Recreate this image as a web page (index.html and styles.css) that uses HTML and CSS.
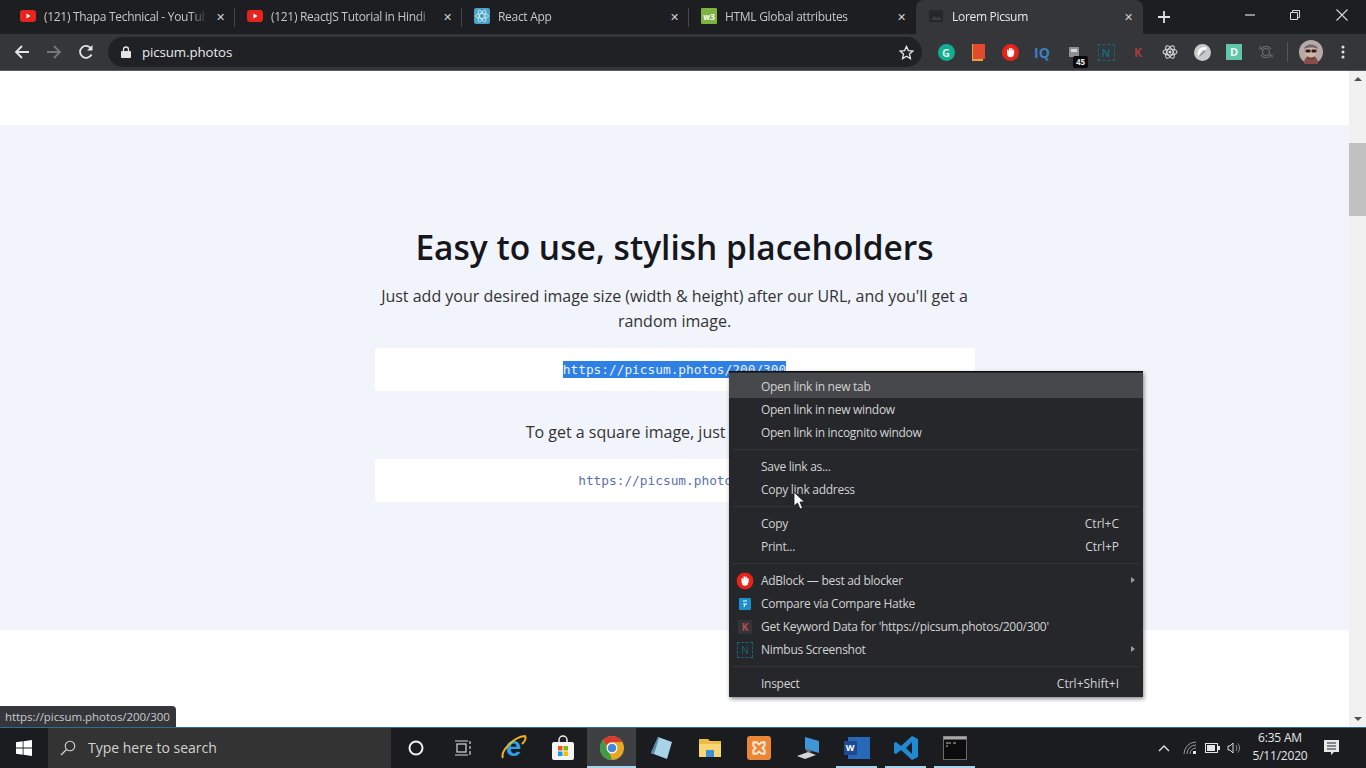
FILE: index.html
```html
<!DOCTYPE html>
<html lang="en">
<head>
    <meta charset="UTF-8">
    <title>Lorem Picsum</title>
    <link rel="stylesheet" href="styles.css">
</head>
<body>

    <!-- tab strip -->
    <div class="tabstrip">
        <div class="tab">
            <svg class="tab-icon" viewBox="0 0 16 16"><rect x="0" y="2" width="16" height="12" rx="3" fill="#e5241d"/><path d="M6.5 5.5l4 2.500-4 2.500z" fill="#fff"/></svg>
            <span class="tab-title">(121) Thapa Technical - YouTub</span>
            <span class="tab-close">&#10005;</span>
        </div>
        <div class="tab">
            <svg class="tab-icon" viewBox="0 0 16 16"><rect x="0" y="2" width="16" height="12" rx="3" fill="#e5241d"/><path d="M6.5 5.5l4 2.500-4 2.500z" fill="#fff"/></svg>
            <span class="tab-title">(121) ReactJS Tutorial in Hindi</span>
            <span class="tab-close">&#10005;</span>
        </div>
        <div class="tab">
            <svg class="tab-icon" viewBox="0 0 16 16"><rect width="16" height="16" rx="2" fill="#4aa3c7"/><g fill="none" stroke="#d5eef7" stroke-width=".8"><ellipse cx="8" cy="8" rx="6.500" ry="2.500"/><ellipse cx="8" cy="8" rx="6.500" ry="2.500" transform="rotate(60 8 8)"/><ellipse cx="8" cy="8" rx="6.500" ry="2.500" transform="rotate(120 8 8)"/></g></svg>
            <span class="tab-title">React App</span>
            <span class="tab-close">&#10005;</span>
        </div>
        <div class="tab tab-last">
            <svg class="tab-icon" viewBox="0 0 16 16"><rect width="16" height="16" rx="1" fill="#7cb342"/><text x="8" y="11.500" text-anchor="middle" class="w3-text">w3</text></svg>
            <span class="tab-title">HTML Global attributes</span>
            <span class="tab-close">&#10005;</span>
        </div>
        <div class="tab tab-active">
            <svg class="tab-icon" viewBox="0 0 16 16"><rect x="1" y="2" width="14" height="12" rx="2" fill="#26272a"/><path d="M3 12l3.500-4 2.500 2.500 2-2 2.500 3.500z" fill="#3e3f43"/></svg>
            <span class="tab-title">Lorem Picsum</span>
            <span class="tab-close">&#10005;</span>
        </div>
        <span class="new-tab">
            <svg width="12" height="12" viewBox="0 0 12 12"><path d="M6 0v12M0 6h12" stroke="#dfe1e5" stroke-width="1.800"/></svg>
        </span>
        <div class="window-controls">
            <svg width="10" height="10" viewBox="0 0 10 10"><path d="M0 5h10" stroke="#d8d9db" stroke-width="1.200"/></svg>
            <svg width="10" height="10" viewBox="0 0 10 10"><path d="M.5 2.500h7v7h-7zM2.500 2.500v-2h7v7h-2" fill="none" stroke="#d8d9db"/></svg>
            <svg width="12" height="12" viewBox="0 0 12 12"><path d="M.5.5l11 11M11.500.5l-11 11" stroke="#d8d9db" stroke-width="1.100"/></svg>
        </div>
    </div>

    <!-- address bar -->
    <div class="toolbar">
        <div class="nav-buttons">
            <svg width="16" height="16" viewBox="0 0 16 16"><path d="M15 8H2M8 2L2 8l6 6" fill="none" stroke="#e3e4e6" stroke-width="1.800"/></svg>
            <svg width="16" height="16" viewBox="0 0 16 16"><path d="M1 8h13M8 2l6 6-6 6" fill="none" stroke="#74767a" stroke-width="1.800"/></svg>
            <svg width="16" height="16" viewBox="0 0 16 16"><path d="M13.500 10.500A6 6 0 1 1 13 4.500" fill="none" stroke="#e3e4e6" stroke-width="1.800"/><path d="M14.500 1v5.500H9z" fill="#e3e4e6"/></svg>
        </div>
        <div class="omnibox">
            <svg width="10" height="12" viewBox="0 0 10 12"><path d="M2.500 5V3.500a2.500 2.500 0 0 1 5 0V5" fill="none" stroke="#e3e4e6" stroke-width="1.300"/><rect y="5" width="10" height="7" rx="1" fill="#e3e4e6"/></svg>
            <span class="url">picsum.photos</span>
            <svg class="star" width="15" height="15" viewBox="0 0 16 16"><path d="M8 1.500l2 4.500 4.800.5-3.600 3.200 1 4.800L8 12l-4.200 2.500 1-4.800L1.200 6.500 6 6z" fill="none" stroke="#e3e4e6" stroke-width="1.400"/></svg>
        </div>
        <div class="extensions">
            <span class="ext"><span class="ext-grammarly">G</span></span>
            <span class="ext"><svg width="14" height="17" viewBox="0 0 14 17"><rect width="13" height="15" x="1" fill="#e2492d"/><path d="M1 0v17h11v-2H2V0z" fill="#e8a33b"/></svg></span>
            <span class="ext"><svg width="17" height="17" viewBox="0 0 16 16"><circle cx="8" cy="8" r="8" fill="#e8231a"/><g stroke="#fff" stroke-width="1.500" stroke-linecap="round"><path d="M5.500 6v3M7.300 4.200V8M9 4.500V8M10.700 6v3"/></g><circle cx="8" cy="9.500" r="3" fill="#fff"/></svg></span>
            <span class="ext ext-iq">IQ</span>
            <span class="ext">
                <svg width="10" height="12" viewBox="0 0 10 12"><rect width="10" height="10" y="1" fill="#8e9094"/><rect x="2" y="3" width="6" height="3" fill="#d6d7d9"/></svg>
                <span class="ext-badge">45</span>
            </span>
            <span class="ext"><span class="ext-nimbus">N</span></span>
            <span class="ext ext-k">K</span>
            <span class="ext"><svg width="16" height="16" viewBox="0 0 16 16"><g fill="none" stroke="#d9dadc" stroke-width="1.100"><ellipse cx="8" cy="8" rx="7" ry="3"/><ellipse cx="8" cy="8" rx="7" ry="3" transform="rotate(60 8 8)"/><ellipse cx="8" cy="8" rx="7" ry="3" transform="rotate(120 8 8)"/></g><circle cx="8" cy="8" r="1.500" fill="#d9dadc"/></svg></span>
            <span class="ext"><svg width="17" height="17" viewBox="0 0 16 16"><circle cx="8" cy="8" r="8" fill="#c8c9cb"/><path d="M11.500 4.500A5 5 0 0 0 5 11" fill="none" stroke="#fff" stroke-width="2.500"/><path d="M5 11.500l5.500-5" stroke="#77797c" stroke-width="1"/></svg></span>
            <span class="ext"><span class="ext-d">D</span></span>
            <span class="ext"><svg width="16" height="16" viewBox="0 0 16 16"><g fill="none" stroke="#67696d" stroke-width="1.200"><path d="M3 5a6 6 0 0 1 10 0"/><path d="M13 11a6 6 0 0 1-10 0"/><circle cx="8" cy="8" r="3.500"/><path d="M2 2v3h3M14 14v-3h-3"/></g></svg></span>
        </div>
        <span class="toolbar-divider"></span>
        <svg class="avatar" width="24" height="24" viewBox="0 0 24 24"><circle cx="12" cy="12" r="12" fill="#b9a9a6"/><path d="M5 24c0-6 3-8 7-8s7 2 7 8z" fill="#8c4b4b"/><ellipse cx="12" cy="11" rx="6" ry="7" fill="#d8b3a4"/><path d="M5 9c1-6 13-6 14 0-4-2-10-2-14 0z" fill="#6d6a6c"/><rect x="6.500" y="9.500" width="5" height="3" rx="1" fill="#222"/><rect x="12.500" y="9.500" width="5" height="3" rx="1" fill="#222"/><path d="M8 16c2 2 6 2 8 0v2c-2 2-6 2-8 0z" fill="#5c4a45"/></svg>
        <svg class="menu-dots" width="4" height="14" viewBox="0 0 4 14"><circle cx="2" cy="2" r="1.500" fill="#e3e4e6"/><circle cx="2" cy="7" r="1.500" fill="#e3e4e6"/><circle cx="2" cy="12" r="1.500" fill="#e3e4e6"/></svg>
    </div>

    <!-- page -->
    <div class="viewport">
        <div class="page">
            <section class="hero">
                <h1>Easy to use, stylish placeholders</h1>
                <p>Just add your desired image size (width &amp; height) after our URL, and you'll get a random image.</p>
                <div class="code-box"><span class="code-selected">https://picsum.photos/200/300</span></div>
                <p class="square-text">To get a square image, just add the size.</p>
                <div class="code-box"><span class="code-link">https://picsum.photos/200</span></div>
            </section>
        </div>
        <div class="scrollbar">
            <span class="arrow-up"></span>
            <span class="thumb"></span>
            <span class="arrow-down"></span>
        </div>
    </div>

    <!-- taskbar -->
    <div class="taskbar">
        <div class="start">
            <svg width="16" height="16" viewBox="0 0 16 16"><path d="M0 2.300l6.700-1v6.200H0zM7.500 1.200L16 0v7.500H7.500zM0 8.500h6.700v6.200l-6.700-1zM7.500 8.500H16V16l-8.500-1.200z" fill="#fff"/></svg>
        </div>
        <div class="search">
            <svg width="16" height="16" viewBox="0 0 16 16"><circle cx="10" cy="6" r="4.800" fill="none" stroke="#d5d5d5" stroke-width="1.100"/><path d="M6.500 9.500L1 15" stroke="#d5d5d5" stroke-width="1.300"/></svg>
            <span>Type here to search</span>
        </div>
        <div class="task-icons">
            <span class="task"><svg width="16" height="16" viewBox="0 0 16 16"><circle cx="8" cy="8" r="6.500" fill="none" stroke="#f2f2f2" stroke-width="2"/></svg></span>
            <span class="task task-view"><svg width="18" height="16" viewBox="0 0 18 16"><g fill="none" stroke="#d8d8d8" stroke-width="1.200"><rect x="3" y="4" width="9" height="8"/><path d="M1 1h13M1 15h13M16 1v3M16 6v3M16 11v4"/></g></svg></span>
            <span class="task"><svg class="ie-icon" width="28" height="30" viewBox="0 0 28 30"><text x="13.500" y="23" text-anchor="middle" class="ie-text">e</text><path d="M3 25C0 19 13 4 25 3c2 3-1 6-3 8" fill="none" stroke="#eeb420" stroke-width="2"/></svg></span>
            <span class="task"><svg width="24" height="26" viewBox="0 0 24 26"><path d="M8 8V5a4 4 0 0 1 8 0v3" fill="none" stroke="#eee" stroke-width="1.500"/><rect x="1" y="7" width="22" height="18" rx="2" fill="#f4f4f4"/><rect x="7" y="11" width="4.500" height="4.500" fill="#f25022"/><rect x="12.500" y="11" width="4.500" height="4.500" fill="#7fba00"/><rect x="7" y="16.500" width="4.500" height="4.500" fill="#00a4ef"/><rect x="12.500" y="16.500" width="4.500" height="4.500" fill="#ffb900"/></svg></span>
            <span class="task task-active"><svg width="24" height="24" viewBox="0 0 24 24"><circle cx="12" cy="12" r="12" fill="#e5a823"/><path d="M12 0a12 12 0 0 1 10.400 6H12a6 6 0 0 0-5.600 3.800L3 4a12 12 0 0 1 9-4z" fill="#d93a2e"/><path d="M3 4l5 9 4 11A12 12 0 0 1 3 4z" fill="#3f9a47"/><circle cx="12" cy="12" r="5.500" fill="#fff"/><circle cx="12" cy="12" r="4.300" fill="#4a86d8"/></svg></span>
            <span class="task"><svg width="24" height="24" viewBox="0 0 24 24"><path d="M9 1l14 5-5 17L2 17z" fill="#a9d3e6"/><path d="M2 17L9 1l1 1-5 16z" fill="#4f8aa8"/></svg></span>
            <span class="task"><svg width="22" height="20" viewBox="0 0 22 20"><path d="M0 1h9l2 2h11v16H0z" fill="#eebd45"/><rect y="6" width="22" height="13" fill="#f7d774"/><rect x="7" y="12" width="8" height="7" fill="#3d8fd1"/></svg></span>
            <span class="task"><span class="xampp"><svg width="18" height="18" viewBox="0 0 16 16"><path d="M3 3h3l2 2 2-2h3v3l-2 2 2 2v3h-3l-2-2-2 2H3v-3l2-2-2-2z" fill="none" stroke="#fbe6d3" stroke-width="1.800" stroke-linejoin="round"/></svg></span></span>
            <span class="task"><svg width="24" height="24" viewBox="0 0 24 24"><path d="M9 1l14 4v12l-14-4z" fill="#3f95d8"/><path d="M1 20l11-4 8 3-11 4z" fill="#d5d5d5"/><path d="M10 13l5 2v2l-5-2z" fill="#6f7276"/></svg></span>
            <span class="task task-open"><span class="word-icon"><span class="word-badge">W</span></span></span>
            <span class="task task-open"><svg width="26" height="26" viewBox="0 0 26 26"><path d="M19 1l6 3v18l-6 3-11-10-5 4-2-1V8l2-1 5 4zM19 7l-6 6 6 6z" fill="#1f8ad2"/></svg></span>
            <span class="task task-open"><svg width="24" height="24" viewBox="0 0 24 24"><rect width="24" height="24" fill="#0c0c0c"/><rect x=".5" y=".5" width="23" height="23" fill="none" stroke="#6a6a6a"/><rect x=".5" y=".5" width="23" height="3" fill="#a9a9a9"/><path d="M3 7h5M10 7h3M3 10h2" stroke="#bdbdbd"/></svg></span>
        </div>
        <div class="tray">
            <svg class="tray-up" width="12" height="8" viewBox="0 0 12 8"><path d="M1 7l5-5 5 5" fill="none" stroke="#e4e4e4" stroke-width="1.300"/></svg>
            <svg class="tray-wifi" width="14" height="14" viewBox="0 0 14 14"><g fill="none" stroke="#9a9a9a"><path d="M1 13A12 12 0 0 1 13 1"/><path d="M4 13a9 9 0 0 1 9-9"/><path d="M7 13a6 6 0 0 1 6-6"/></g><rect x="10" y="10" width="3" height="3" fill="#e4e4e4"/></svg>
            <svg width="15" height="10" viewBox="0 0 15 10"><rect x=".5" y=".5" width="12" height="9" fill="none" stroke="#e4e4e4"/><rect x="2" y="2" width="8" height="6" fill="#e4e4e4"/><rect x="13" y="3" width="2" height="4" fill="#e4e4e4"/></svg>
            <svg width="14" height="14" viewBox="0 0 14 14"><path d="M1 5h2l3-3v10L3 9H1z" fill="none" stroke="#d8d8d8"/><path d="M9 4c1 2 1 4 0 6M11 2.500c2 3 2 6 0 9" fill="none" stroke="#8d8d8d"/></svg>
        </div>
        <div class="clock">
            <span>6:35 AM</span>
            <span>5/11/2020</span>
        </div>
        <span class="notify"><svg width="16" height="16" viewBox="0 0 16 16"><path d="M0 0h15v12H10l-3 3v-3H0z" fill="#e8e8e8"/><path d="M3 3h9M3 6h9M3 9h9" stroke="#222" /></svg></span>
    </div>

    <!-- status bubble -->
    <div class="status-bubble">https://picsum.photos/200/300</div>

    <!-- right click menu -->
    <div class="context-menu">
        <div class="menu-item menu-hover"><span>Open link in new tab</span></div>
        <div class="menu-item"><span>Open link in new window</span></div>
        <div class="menu-item"><span>Open link in incognito window</span></div>
        <div class="menu-sep"></div>
        <div class="menu-item"><span>Save link as...</span></div>
        <div class="menu-item"><span>Copy link address</span></div>
        <div class="menu-sep"></div>
        <div class="menu-item"><span>Copy</span><span class="shortcut">Ctrl+C</span></div>
        <div class="menu-item"><span>Print...</span><span class="shortcut">Ctrl+P</span></div>
        <div class="menu-sep"></div>
        <div class="menu-item">
            <svg class="menu-icon" width="17" height="17" viewBox="0 0 16 16"><circle cx="8" cy="8" r="8" fill="#e8231a"/><g stroke="#fff" stroke-width="1.500" stroke-linecap="round"><path d="M5.500 6v3M7.300 4.200V8M9 4.500V8M10.700 6v3"/></g><circle cx="8" cy="9.500" r="3" fill="#fff"/></svg>
            <span>AdBlock — best ad blocker</span><span class="submenu"></span>
        </div>
        <div class="menu-item">
            <svg class="menu-icon" width="12" height="12" viewBox="0 0 12 12"><rect width="12" height="12" rx="1" fill="#1b8fc9"/><path d="M4 3h4M4 6h4M6 6l-1 3" stroke="#fff"/></svg>
            <span>Compare via Compare Hatke</span>
        </div>
        <div class="menu-item">
            <span class="menu-icon menu-k">K</span>
            <span>Get Keyword Data for 'https://picsum.photos/200/300'</span>
        </div>
        <div class="menu-item">
            <span class="menu-icon menu-n">N</span>
            <span>Nimbus Screenshot</span><span class="submenu"></span>
        </div>
        <div class="menu-sep"></div>
        <div class="menu-item"><span>Inspect</span><span class="shortcut">Ctrl+Shift+I</span></div>
    </div>

    <!-- mouse pointer -->
    <svg class="pointer" width="12" height="19" viewBox="0 0 12 19"><path d="M1 1v14l3.500-3 2.500 6 2.500-1-2.500-6h4.500z" fill="#fff" stroke="#111" stroke-width=".8"/></svg>

</body>
</html>
```

FILE: styles.css
```css
* {
    box-sizing: border-box;
}
html, body {
    height: 100%;
}
body {
    margin: 0;
    width: 1366px;
    height: 768px;
    overflow: hidden;
    display: flex;
    flex-direction: column;
    font-family: "Open Sans", sans-serif;
    background-color: #fff;
}

/* tab strip */
.tabstrip {
    height: 34px;
    flex: none;
    display: flex;
    align-items: stretch;
    padding-left: 8px;
    background-color: #1d1e21;
    color: #c6c7ca;
    font-size: 12px;
}
.tab {
    width: 227px;
    display: flex;
    align-items: center;
    padding: 0 8px 2px 12px;
    position: relative;
}
.tab::after {
    content: "";
    position: absolute;
    right: 0;
    top: 8px;
    height: 19px;
    width: 1px;
    background-color: #46474a;
}
.tab-last::after, .tab-active::after {
    display: none;
}
.tab-active {
    background-color: #35363a;
    border-radius: 8px 8px 0 0;
    color: #e8e9eb;
}
.tab-icon {
    width: 16px;
    height: 16px;
    flex: none;
    margin-right: 8px;
}
.tab-title {
    flex: 1;
    overflow: hidden;
    white-space: nowrap;
    letter-spacing: -0.3px;
    -webkit-mask-image: linear-gradient(to right, #000 88%, transparent 98%);
    mask-image: linear-gradient(to right, #000 88%, transparent 98%);
}
.tab-close {
    width: 14px;
    flex: none;
    margin-left: 3px;
    font-size: 11px;
    text-align: center;
    color: #d0d1d4;
}
.w3-text {
    font-size: 8px;
    font-weight: 700;
    fill: #fff;
}
.new-tab {
    width: 42px;
    display: flex;
    align-items: center;
    justify-content: center;
}
.window-controls {
    margin-left: auto;
    display: flex;
    align-items: center;
    width: 139px;
    justify-content: space-around;
    padding-bottom: 4px;
}

/* toolbar */
.toolbar {
    height: 37px;
    flex: none;
    display: flex;
    align-items: center;
    padding-left: 14px;
    background-color: #35363a;
    border-bottom: 1px solid #5a5b5e;
}
.nav-buttons {
    display: flex;
    gap: 16px;
    width: 94px;
}
.omnibox {
    width: 814px;
    height: 30px;
    border-radius: 15px;
    background-color: #202124;
    display: flex;
    align-items: center;
    padding: 0 8px 0 13px;
    color: #e8eaed;
    font-size: 13.3px;
}
.url {
    margin-left: 11px;
    letter-spacing: -0.1px;
}
.star {
    margin-left: auto;
}
.extensions {
    display: flex;
    margin-left: 8px;
}
.ext {
    width: 32px;
    height: 24px;
    display: flex;
    align-items: center;
    justify-content: center;
    position: relative;
    font-size: 14px;
    font-weight: 700;
}
.ext-grammarly {
    width: 17px;
    height: 17px;
    border-radius: 50%;
    background-color: #13ad92;
    color: #d9f5ef;
    font-size: 11px;
    line-height: 17px;
    text-align: center;
}
.ext-iq {
    color: #3a82c6;
}
.ext-k {
    color: #a63c3f;
    font-size: 12px;
}
.ext-nimbus {
    width: 17px;
    height: 17px;
    border: 1px dashed #16657a;
    color: #16657a;
    font-size: 11px;
    line-height: 15px;
    text-align: center;
}
.ext-d {
    width: 16px;
    height: 16px;
    background-color: #62c7a7;
    color: #eefaf6;
    font-size: 11px;
    line-height: 16px;
    text-align: center;
}
.ext-badge {
    position: absolute;
    left: 15px;
    bottom: -4px;
    width: 15px;
    height: 12px;
    border-radius: 2px;
    background-color: #0b0b0b;
    color: #e8e8e8;
    font-size: 8px;
    line-height: 12px;
    text-align: center;
}
.toolbar-divider {
    width: 1px;
    height: 20px;
    margin-left: 5px;
    background-color: #55565a;
}
.avatar {
    margin-left: 11px;
}
.menu-dots {
    margin-left: 18px;
}

/* page */
.viewport {
    flex: 1;
    min-height: 0;
    display: flex;
}
.page {
    flex: 1;
    padding-top: 54px;
    background-color: #fff;
}
.hero {
    height: 505px;
    padding-top: 99px;
    background-color: #f1f4fb;
    text-align: center;
    color: #333;
}
.hero h1 {
    margin: 0 0 14px;
    font-size: 33.5px;
    line-height: 46px;
    font-weight: 600;
    color: #15171c;
}
.hero p {
    width: 600px;
    margin: 0 auto;
    font-size: 16px;
    line-height: 25px;
}
.code-box {
    width: 600px;
    height: 43px;
    margin: 14px auto 0;
    background-color: #fff;
    border-radius: 3px;
    display: flex;
    align-items: center;
    justify-content: center;
    font-family: "DejaVu Sans Mono", monospace;
    font-size: 12.8px;
}
.hero .square-text {
    margin-top: 29px;
}
.code-selected {
    background-color: #2f80e4;
    color: #e9f1fb;
    line-height: 17px;
}
.code-link {
    color: #5c6fae;
}

/* scrollbar */
.scrollbar {
    width: 17px;
    flex: none;
    background-color: #f1f1f1;
    display: flex;
    flex-direction: column;
    align-items: center;
}
.arrow-up, .arrow-down {
    width: 0;
    height: 0;
    border-left: 4px solid transparent;
    border-right: 4px solid transparent;
}
.arrow-up {
    margin-top: 6px;
    border-bottom: 4px solid #505050;
}
.thumb {
    width: 100%;
    height: 73px;
    margin-top: 62px;
    background-color: #c1c1c1;
}
.arrow-down {
    margin-top: auto;
    margin-bottom: 6px;
    border-top: 4px solid #505050;
}

/* taskbar */
.taskbar {
    height: 41px;
    flex: none;
    display: flex;
    align-items: center;
    background-color: #1a1c20;
    border-top: 1px solid #2d6f93;
    color: #e6e6e6;
}
.start {
    width: 48px;
    display: flex;
    justify-content: center;
}
.search {
    width: 343px;
    height: 40px;
    display: flex;
    align-items: center;
    gap: 12px;
    padding: 0 0 1px 12px;
    background-color: #333;
    font-size: 14px;
    color: #d2d2d2;
}
.task-icons {
    display: flex;
    height: 40px;
}
.task {
    width: 49px;
    height: 40px;
    display: flex;
    align-items: center;
    justify-content: center;
    position: relative;
}
.task-view svg {
    margin-right: 4px;
}
.task-active {
    background-color: #3e4043;
}
.task-active::after, .task-open::after {
    content: "";
    position: absolute;
    left: 4px;
    right: 4px;
    bottom: 0;
    height: 2px;
    background-color: #a5d3ea;
}
.task-active::after {
    left: 0;
    right: 0;
}
.xampp {
    width: 24px;
    height: 24px;
    border-radius: 3px;
    background-color: #ea8636;
    display: flex;
    align-items: center;
    justify-content: center;
}
.word-icon {
    width: 22px;
    height: 22px;
    margin-left: 4px;
    background-color: #2868b8;
    display: flex;
    align-items: center;
}
.word-badge {
    width: 13px;
    height: 14px;
    margin-left: -4px;
    background-color: #1d4a94;
    color: #fff;
    font-size: 9px;
    font-weight: 700;
    line-height: 14px;
    text-align: center;
}
.ie-icon {
    overflow: visible;
}
.ie-text {
    font-family: "Liberation Sans", sans-serif;
    font-size: 28px;
    font-weight: 700;
    fill: #2f9fe6;
}
.tray {
    display: flex;
    align-items: center;
    gap: 7px;
    margin-left: auto;
}
.tray-up {
    margin-right: 6px;
}
.tray-wifi {
    margin-right: 1px;
}
.clock {
    width: 76px;
    margin-left: 1px;
    display: flex;
    flex-direction: column;
    align-items: center;
    gap: 4px;
    padding-bottom: 2px;
    font-size: 12px;
    line-height: 14px;
    letter-spacing: -0.2px;
}
.notify {
    width: 48px;
    display: flex;
    justify-content: center;
    padding-right: 20px;
}

/* overlays */
.status-bubble {
    position: absolute;
    left: 0;
    top: 706px;
    width: 176px;
    height: 21px;
    padding-left: 5px;
    border-top-right-radius: 4px;
    background-color: #35363a;
    color: #c9cacd;
    font-size: 11.5px;
    line-height: 21px;
    letter-spacing: -0.05px;
}
.context-menu {
    position: absolute;
    left: 729px;
    top: 371px;
    width: 414px;
    height: 326px;
    padding: 3px 0 2px;
    background-color: #26272a;
    border-top: 1px solid #111;
    box-shadow: 1px 2px 4px rgba(0, 0, 0, 0.45);
    color: #d2d3d5;
    font-size: 12px;
}
.menu-item {
    height: 23px;
    display: flex;
    align-items: center;
    padding: 0 24px 0 32px;
    position: relative;
    white-space: nowrap;
    letter-spacing: -0.28px;
}
.menu-hover {
    background-color: #47484b;
    box-shadow: 0 -2px 0 #47484b;
}
.menu-sep {
    height: 11px;
    position: relative;
}
.menu-sep::after {
    content: "";
    position: absolute;
    left: 4px;
    right: 4px;
    top: 5px;
    height: 1px;
    background-color: #343538;
}
.shortcut {
    margin-left: auto;
    letter-spacing: 0;
}
.submenu {
    position: absolute;
    right: 8px;
    top: 8px;
    border-left: 4px solid #9a9b9e;
    border-top: 3.500px solid transparent;
    border-bottom: 3.500px solid transparent;
}
.menu-icon {
    position: absolute;
    left: 16px;
    top: 50%;
    transform: translate(-50%, -50%);
}
.menu-k {
    width: 14px;
    height: 14px;
    background-color: #34333a;
    color: #b4504a;
    font-size: 10px;
    font-weight: 700;
    line-height: 14px;
    text-align: center;
    letter-spacing: 0;
}
.menu-n {
    width: 16px;
    height: 16px;
    border: 1px dashed #16657a;
    color: #16657a;
    font-size: 10px;
    line-height: 14px;
    text-align: center;
    letter-spacing: 0;
}
.pointer {
    position: absolute;
    left: 793px;
    top: 491px;
}
```
